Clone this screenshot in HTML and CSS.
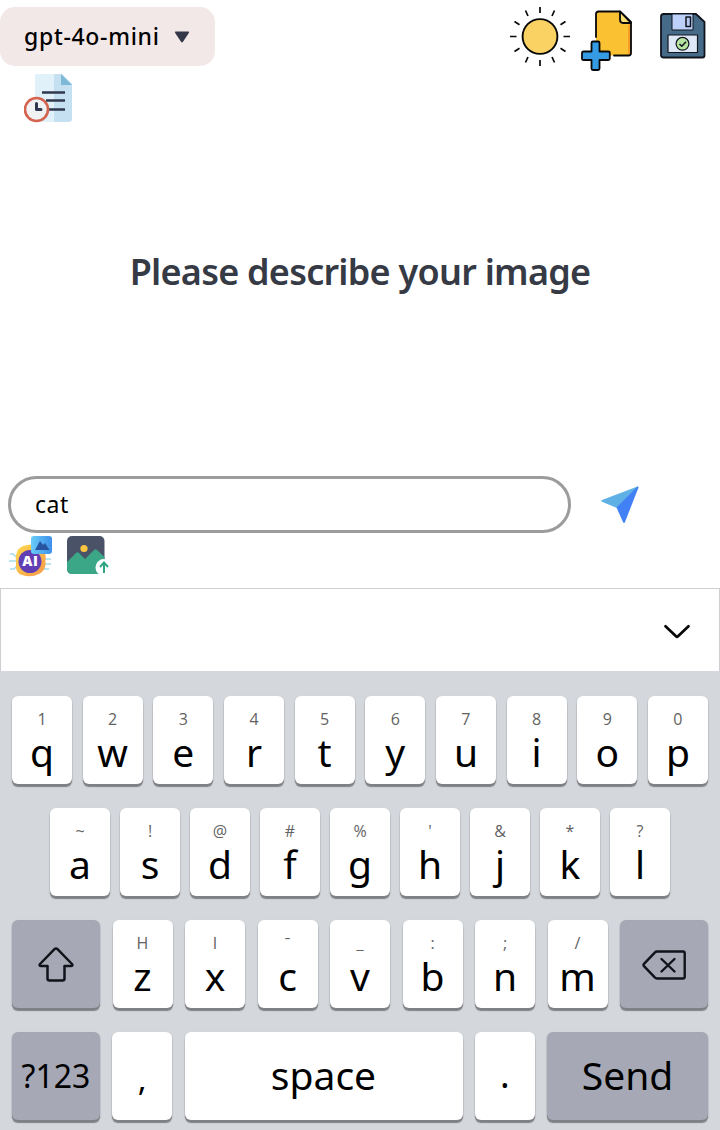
FILE: index.html
```html
<!DOCTYPE html>
<html lang="en">
<head>
<meta charset="utf-8">
<title>Image chat</title>
<link rel="stylesheet" href="styles.css">
</head>
<body>
<main class="app">
  <header class="topbar">
    <button class="model"><span class="model-name">gpt-4o-mini</span>
      <svg class="caret" width="16" height="12" viewBox="0 0 16 12"><path d="M1.800.5h12.400q1.500 0 .6 1.400L9 10.800q-1 1.200-2 0L1.200 1.900Q.3.500 1.800.5z" fill="#343747"/></svg>
    </button>
    <div class="actions">
      <svg width="60" height="60" viewBox="0 0 60 60" stroke="#080808" stroke-width="1.700" fill="none"><circle cx="30" cy="29.500" r="17.400" fill="#fad263" stroke-width="1.900"/><path d="M30 0v6M30 53v6M0 29.500h6.500M53.500 29.500H60M15.500 3.500l2.500 5.500M44.500 3.500L42 9M15.500 55.500L18 50M44.500 55.500L42 50M4.500 14.500l5 3.200M55.500 14.500l-5 3.200M4.500 44.500l5-3.200M55.500 44.500l-5-3.200"/></svg>
      <svg width="52" height="62" viewBox="0 0 52 62" stroke="#080808" stroke-width="1.800" stroke-linejoin="round" stroke-linecap="round"><path d="M15 31V4q0-2.500 2.500-2.500H39L50 12v31q0 2.500-2.500 2.500H28V42H15z" fill="#fac232" stroke="none"/><path d="M47 15v30l3-2V14z" fill="#f59e28" stroke="none"/><path d="M15 27V4q0-2.500 2.500-2.500H39L50 12v31q0 2.500-2.500 2.500H33" fill="none"/><path d="M39 1.500v8q0 3.500 3 3.500h8z" fill="#fce073"/><path d="M12 31.500h5q1.500 0 1.500 1.500v8.500H27q1.800 0 1.800 1.500v5.500q0 1.500-1.500 1.500h-8.800v8.500q0 1.500-1.500 1.500h-5q-1.500 0-1.500-1.500V50H2.500Q1 50 1 48.500V43q0-1.500 1.500-1.500h8V33q0-1.500 1.500-1.500z" fill="#359be5"/></svg>
      <svg class="save" width="46" height="46" viewBox="0 0 46 46" stroke="#10151d" stroke-width="1.500" stroke-linejoin="round"><path d="M3.500 1H36l8.500 8v33.500q0 2-2 2h-39q-2.500 0-2.500-2.500V3.500Q1 1 3.500 1z" fill="#466b89" stroke-width="1.800"/><path d="M12 1h21v16H12z" fill="#bdd0fa" stroke-width="1"/><path d="M26 4h4.500v9.500H26z" fill="#b5c9f5"/><path d="M8 22h29.500v17.500H8z" fill="#dfe8f7" stroke-width="1.200"/><circle cx="22.500" cy="30.800" r="6.400" fill="#b6e3a0" stroke-width="1.200"/><path d="M19.500 31l2.300 2.300 4.200-4.500" fill="none"/></svg>
    </div>
  </header>

  <svg class="history" width="49" height="49" viewBox="0 0 49 49"><path d="M11 3q0-3 3-3h24l10 10v35q0 3-3 3H11z" fill="#c5e0f0"/><path d="M11 3q0-3 3-3h16v48H11z" fill="#e1f1f9"/><path d="M37 0l11 11H37z" fill="#7db8d8"/><path d="M18 18.500h23M22 26.500h19M25 35.500h16" stroke="#303850" stroke-width="2.600"/><circle cx="12.500" cy="35.500" r="11.500" fill="#f1f2f3" stroke="#d46350" stroke-width="2.600"/><path d="M12.500 29.500v6H17" fill="none" stroke="#303850" stroke-width="3" stroke-linecap="round" stroke-linejoin="round"/></svg>

  <h1 class="prompt-title">Please describe your image</h1>

  <form class="composer">
    <div class="field">cat</div>
    <svg class="send" width="38" height="38" viewBox="0 0 38 38"><path d="M36.500.5L1 14q-1.500.8 0 1.700l15 6.300L37 1z" fill="#5eb0e5"/><path d="M37.500 1.500L24 36q-.9 2-2 0L15.500 21.500 36.500.5q1-.5 1 1z" fill="#4280f5"/></svg>
  </form>

  <div class="tools">
    <svg width="44" height="42" viewBox="0 0 44 42"><defs><linearGradient id="gold" x1="0" y1="0" x2="1" y2="1"><stop offset="0" stop-color="#ffd84b"/><stop offset="1" stop-color="#f6994b"/></linearGradient><linearGradient id="sky" x1="0" x2="1"><stop offset="0" stop-color="#69ccf8"/><stop offset="1" stop-color="#3d8fea"/></linearGradient></defs><path d="M1 18h3l2 2h5M0 25h9M1 33h4l2-2h4M42 23h-9M42 28h-9M40 33h-7" stroke="#a5dced" stroke-width="1.600" fill="none"/><path d="M14 10q9-3 16 0 8 4 6.500 15 1 9-6.500 13-8 4-17 1-7-2-6-12-2-13 7-17z" fill="url(#gold)"/><circle cx="21" cy="25.500" r="11.500" fill="#623eb5"/><rect x="22" y="0" width="21" height="18" rx="3" fill="url(#sky)"/><path d="M26 14l5-9 3 4 2-2 4.500 7z" fill="#28559f"/><text x="21.300" y="30.300" text-anchor="middle" class="ai">AI</text></svg>
    <svg width="43" height="40" viewBox="0 0 43 40"><rect width="37.500" height="38" rx="5" fill="#4a5267"/><path d="M0 26l9-9q1.500-1.500 3 0l6 6 9-9q1.500-1.500 3 0l7.500 7v12q0 5-5 5H5q-5 0-5-5z" fill="#3ba787"/><circle cx="17" cy="12.500" r="3.600" fill="#fac641"/><circle cx="37" cy="31.500" r="8.500" fill="#fff"/><path d="M37 37V27M33 31l4-4.500 4 4.500" fill="none" stroke="#31a485" stroke-width="2"/></svg>
  </div>

  <div class="suggestions">
    <svg width="28" height="16" viewBox="0 0 28 16"><path d="M2.500 2.200L13 12.300q1 .9 2 0L25.500 2.200" fill="none" stroke="#080808" stroke-width="2.700" stroke-linecap="round"/></svg>
  </div>

  <section class="keyboard">
    <div class="row">
      <div class="key"><small>1</small><b>q</b></div><div class="key"><small>2</small><b>w</b></div><div class="key"><small>3</small><b>e</b></div><div class="key"><small>4</small><b>r</b></div><div class="key"><small>5</small><b>t</b></div><div class="key"><small>6</small><b>y</b></div><div class="key"><small>7</small><b>u</b></div><div class="key"><small>8</small><b>i</b></div><div class="key"><small>9</small><b>o</b></div><div class="key"><small>0</small><b>p</b></div>
    </div>
    <div class="row row-home">
      <div class="key"><small>~</small><b>a</b></div><div class="key"><small>!</small><b>s</b></div><div class="key"><small>@</small><b>d</b></div><div class="key"><small>#</small><b>f</b></div><div class="key"><small>%</small><b>g</b></div><div class="key"><small>'</small><b>h</b></div><div class="key"><small>&amp;</small><b>j</b></div><div class="key"><small>*</small><b>k</b></div><div class="key"><small>?</small><b>l</b></div>
    </div>
    <div class="row">
      <div class="key plain dark side"><svg width="38" height="38" viewBox="0 0 38 38"><path d="M17.500 3.200q1.500-1.400 3 0L35 18q1.200 2-1 2h-6.500v12.500q0 2-2 2h-13q-2 0-2-2V20H4q-2.200 0-1-2z" fill="none" stroke="#11121a" stroke-width="2.500" stroke-linejoin="round"/></svg></div>
      <div class="key"><small>H</small><b>z</b></div><div class="key"><small>I</small><b>x</b></div><div class="key"><small>ˉ</small><b>c</b></div><div class="key"><small>_</small><b>v</b></div><div class="key"><small>:</small><b>b</b></div><div class="key"><small>;</small><b>n</b></div><div class="key"><small>/</small><b>m</b></div>
      <div class="key plain dark side"><svg width="44" height="30" viewBox="0 0 44 30"><path d="M15 1.500h26q1.700 0 1.700 1.700v23.600q0 1.700-1.700 1.700H15q-1.200 0-2-.8L2 16.200q-1-1.200 0-2.400L13 2.300q.8-.8 2-.8z" fill="none" stroke="#11121a" stroke-width="2.400"/><path d="M19.500 9l13 12.500M32.500 9l-13 12.500" stroke="#11121a" stroke-width="2.400" stroke-linecap="round"/></svg></div>
    </div>
    <div class="row">
      <div class="key plain dark side symbols"><b>?123</b></div><div class="key plain comma"><b>,</b></div><div class="key plain space"><b>space</b></div><div class="key plain period"><b>.</b></div><div class="key plain dark enter"><b>Send</b></div>
    </div>
  </section>
</main>
</body>
</html>
```
FILE: styles.css
```css
* { box-sizing: border-box; }
body { margin: 0; background: #fff; font-family: "Noto Sans", "Open Sans", sans-serif; color: #000; }
svg { display: block; flex: none; }
.app { width: 720px; height: 1130px; display: flex; flex-direction: column; overflow: hidden; }

.topbar { height: 74px; padding-top: 7px; display: flex; justify-content: space-between; align-items: flex-start; }
.model { width: 215px; height: 59px; border: 0; border-radius: 15px; background: #f3e8e8; padding: 0 25px 0 24px; display: flex; align-items: center; justify-content: space-between; font: 500 23px/59px "Noto Sans", sans-serif; color: #000; }
.model-name { white-space: nowrap; letter-spacing: .7px; }
.caret { margin-top: 1px; }
.actions { display: flex; align-items: flex-start; padding-right: 14px; }
.actions svg:nth-child(2) { margin: 3px 0 0 11px; }
.save { margin: 6px 0 0 27px; }

.history { margin-left: 24px; }
.prompt-title { margin: 124px 0 0; height: 50px; font-size: 36px; line-height: 50px; font-weight: 600; color: #363a45; text-align: center; white-space: nowrap; letter-spacing: -.75px; }

.composer { margin: 179px 0 0 8px; display: flex; align-items: center; height: 57px; }
.field { width: 563px; height: 57px; border: 3px solid #9c9c9c; border-radius: 29px; padding: 0 24px; font-size: 23px; line-height: 51px; letter-spacing: .5px; }
.send { margin: 0 0 0 30px; }
.tools { display: flex; gap: 14px; padding: 3px 0 0 9px; height: 55px; }
.ai { font: 800 14px "Open Sans", sans-serif; fill: #fff; letter-spacing: .5px; }

.suggestions { height: 83px; border: 1px solid #cfcfd1; border-bottom: 0; display: flex; justify-content: flex-end; align-items: center; padding: 3px 28px 0 0; }
.keyboard { height: 459px; background: #d4d7dc; padding: 25px 12px 0; display: flex; flex-direction: column; gap: 24px; }
.row { display: flex; justify-content: space-between; height: 88px; }
.row-home { padding: 0 38px; }
.key { width: 60px; height: 88px; padding-top: 11px; border-radius: 6px; background: #fff; box-shadow: 0 3px 1px #7f8186, 0 1px 2px #a5a7ad; display: flex; flex-direction: column; align-items: center; }
.key small { font-family: "Open Sans", sans-serif; font-size: 16px; line-height: 24px; font-weight: 400; color: #626262; }
.key b { margin-top: 2px; font-size: 39px; line-height: 37px; font-weight: 400; }
.plain { justify-content: center; padding: 0 0 5px; }
.dark { background: #a6a8b5; }
.side { width: 88px; }
.side svg { margin-top: 6px; }
.symbols b { font-size: 32px; margin-top: 4px; }
.comma b { font-size: 33px; padding-top: 8px; }
.period b { font-size: 36px; }
.space { width: 278px; }
.enter { width: 161px; }
```
